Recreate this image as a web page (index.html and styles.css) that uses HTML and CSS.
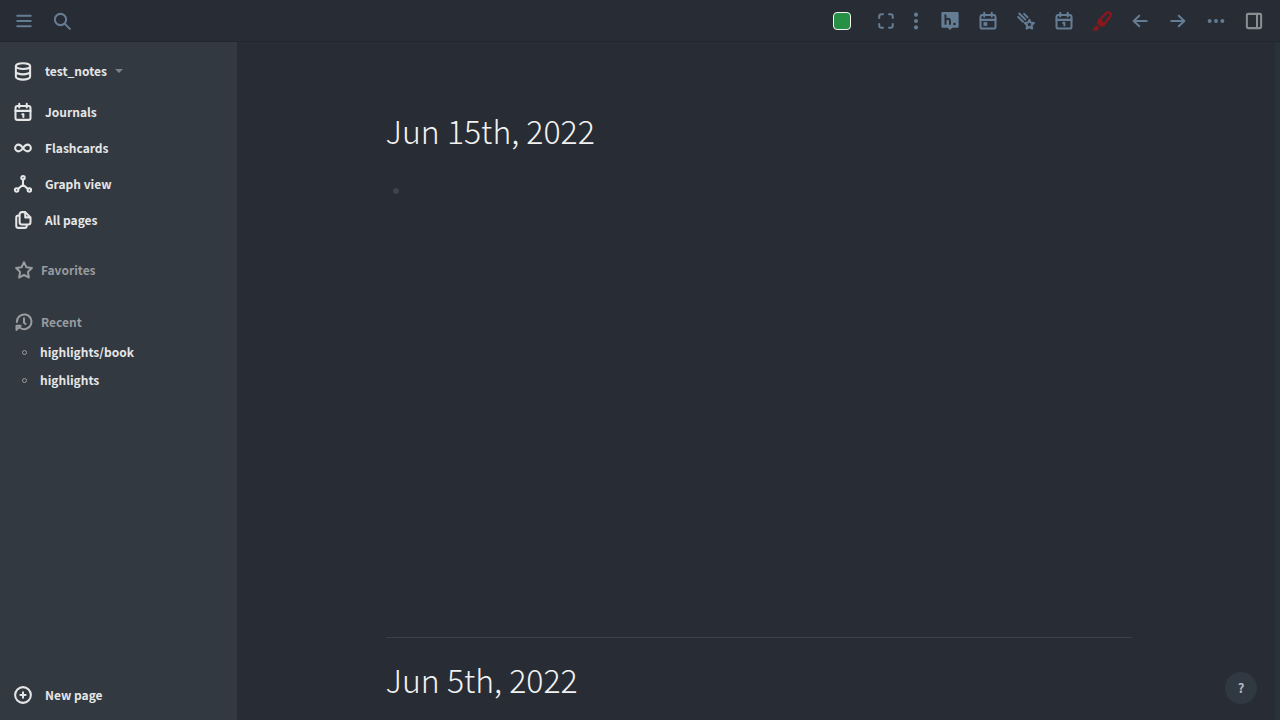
FILE: index.html
```
<!DOCTYPE html>
<html lang="en">
<head>
<meta charset="utf-8">
<meta name="viewport" content="width=device-width, initial-scale=1">
<title>Journals</title>
<link rel="stylesheet" href="styles.css">
</head>
<body>
<div class="app">
  <header class="topbar">
    <div class="tools tools-left">
      <button class="tool" aria-label="Toggle menu"><svg class="icon" viewBox="0 0 24 24"><path d="M3 5h18M3 12h18M3 19h18"/></svg></button>
      <button class="tool" aria-label="Search"><svg class="icon" viewBox="0 0 24 24"><circle cx="10" cy="10" r="7.5"/><path d="M15.500 15.500L22.500 22.500"/></svg></button>
    </div>
    <div class="tools">
      <button class="tool tool-theme" aria-label="Theme colour"><span class="swatch"></span></button>
      <button class="tool tool-narrow" aria-label="Focus mode"><svg class="icon" viewBox="0 0 24 24"><path d="M3 8V6a3 3 0 0 1 3-3h2M16 3h2a3 3 0 0 1 3 3v2M21 16v2a3 3 0 0 1-3 3h-2M8 21H6a3 3 0 0 1-3-3v-2"/></svg></button>
      <button class="tool tool-narrow" aria-label="Plugins"><svg class="icon solid" viewBox="0 0 24 24"><circle cx="12" cy="3.500" r="2.700"/><circle cx="12" cy="12" r="2.700"/><circle cx="12" cy="20.500" r="2.700"/></svg></button>
      <button class="tool" aria-label="Hypothesis"><svg class="icon solid" viewBox="0 0 24 24"><path d="M2 0h20a1.500 1.500 0 0 1 1.500 1.500v18A1.500 1.500 0 0 1 22 21h-7l-3 3-3-3H2a1.500 1.500 0 0 1-1.500-1.500v-18A1.500 1.500 0 0 1 2 0z"/><path class="cut" d="M4.500 4.500H6V17M6 11.500c1.500-3.500 6-3.500 6 .5v5"/><circle class="dot" cx="18" cy="16" r="1.800"/></svg></button>
      <button class="tool" aria-label="Calendar"><svg class="icon" viewBox="0 0 24 24"><rect x="2" y="4" width="20" height="18" rx="2.500"/><path d="M7 1v5M17 1v5M2 10.500h20"/><rect class="fill" x="6" y="13.500" width="5" height="5"/></svg></button>
      <button class="tool" aria-label="Random note"><svg class="icon" viewBox="0 0 24 24"><path d="M1.500 6.500L8 13M3 2l8 8M9.500 2.500L14 7"/><path d="M16.500 10.500l1.700 3.600 4.300.6-3.100 3 .8 4.300-3.700-2-3.700 2 .8-4.300-3.100-3 4.300-.6z"/></svg></button>
      <button class="tool" aria-label="Today"><svg class="icon" viewBox="0 0 24 24"><rect x="2" y="4" width="20" height="18" rx="2.500"/><path d="M7 1v5M17 1v5M2 10.500h20M11 14.500h1.500v3.500"/></svg></button>
      <button class="tool" aria-label="Highlighter"><svg class="icon icon-marker" viewBox="0 0 24 24"><path d="M9 11L16.500 3q3-2 4.800-1t1 4L14.500 16z"/><path class="fill" d="M7.500 9.500L16 17l-2.500 1.500H10L6 15zM5 17l3.500 3-2 3.500H0z"/></svg></button>
      <button class="tool" aria-label="Back"><svg class="icon" viewBox="0 0 24 24"><path d="M21 12H4M11 5l-7.500 7 7.500 7"/></svg></button>
      <button class="tool" aria-label="Forward"><svg class="icon" viewBox="0 0 24 24"><path d="M3 12h17M13 5l7.500 7-7.500 7"/></svg></button>
      <button class="tool" aria-label="More"><svg class="icon solid" viewBox="0 0 24 24"><circle cx="3.500" cy="12" r="2.600"/><circle cx="12" cy="12" r="2.600"/><circle cx="20.500" cy="12" r="2.600"/></svg></button>
      <button class="tool tool-panel" aria-label="Toggle right sidebar"><svg class="icon" viewBox="0 0 24 24"><rect x="2.500" y="2.500" width="19" height="19" rx="1.500"/><path d="M16 2.500v19"/></svg></button>
    </div>
  </header>
  <div class="body">
    <aside class="sidebar">
      <button class="graph">
        <svg class="icon" viewBox="0 0 24 24"><ellipse cx="12" cy="5.500" rx="9.500" ry="3.800"/><path d="M2.500 5.500v14c0 2.200 4.200 4 9.500 4s9.500-1.800 9.500-4v-14M2.500 12.500c0 2.200 4.200 4 9.500 4s9.500-1.800 9.500-4"/></svg>
        <span>test_notes</span><span class="caret"></span>
      </button>
      <nav class="nav">
        <a class="nav-item" href="#"><svg class="icon" viewBox="0 0 24 24"><rect x="2" y="4" width="20" height="18.500" rx="2.500"/><path d="M7 1v5M17 1v5M2 10.500h20M11 15h1.500v3.500"/></svg>Journals</a>
        <a class="nav-item" href="#"><svg class="icon" viewBox="0 0 24 24"><path d="M12 12c-2-3-3.500-4.500-6-4.500a4.500 4.500 0 0 0 0 9c2.500 0 4-1.500 6-4.500 2-3 3.500-4.500 6-4.500a4.500 4.500 0 0 1 0 9c-2.500 0-4-1.500-6-4.500z"/></svg>Flashcards</a>
        <a class="nav-item" href="#"><svg class="icon" viewBox="0 0 24 24"><circle cx="12" cy="3.500" r="2.300"/><circle cx="3.500" cy="20" r="2.300"/><circle cx="20.500" cy="20" r="2.300"/><path d="M12 6v7M5.500 18.500L12 13l6.500 5.500"/></svg>Graph view</a>
        <a class="nav-item" href="#"><svg class="icon" viewBox="0 0 24 24"><path d="M15 1.500h-4.500a3 3 0 0 0-3 3V15a3 3 0 0 0 3 3H19a3 3 0 0 0 3-3V8.500zM15 1.500v7h7M17 18v1.500a3 3 0 0 1-3 3H6a3 3 0 0 1-3-3V9a3 3 0 0 1 3-3h1"/></svg>All pages</a>
      </nav>
      <section class="group">
        <h2 class="group-title"><svg class="icon" viewBox="0 0 24 24"><path d="M12 1.500l3.200 6.800 7.300 1-5.300 5.200 1.300 7.500-6.500-3.600L5.500 22l1.300-7.500L1.500 9.300l7.300-1z"/></svg>Favorites</h2>
      </section>
      <section class="group">
        <h2 class="group-title"><svg class="icon" viewBox="0 0 24 24"><path d="M2.500 12a9.800 9.800 0 1 1 4.500 8M2 22.500V17h5.500zM12 7v6l2 1.500"/></svg>Recent</h2>
        <ul class="recent">
          <li><a class="recent-item" href="#"><span class="ring"></span>highlights/book</a></li>
          <li><a class="recent-item" href="#"><span class="ring"></span>highlights</a></li>
        </ul>
      </section>
      <button class="new-page"><svg class="icon" viewBox="0 0 24 24"><circle cx="12" cy="12" r="10.500"/><path d="M12 8.500v7M8.500 12h7"/></svg>New page</button>
    </aside>
    <main class="main">
      <div class="journals">
        <article class="day">
          <h1 class="day-title">Jun 15th, 2022</h1>
          <ul class="blocks"><li class="block"></li></ul>
        </article>
        <article class="day">
          <h1 class="day-title">Jun 5th, 2022</h1>
        </article>
      </div>
    </main>
  </div>
  <button class="help" aria-label="Help">?</button>
  <div class="scroll-edge"></div>
</div>
</body>
</html>
```
FILE: styles.css
```
* { box-sizing: border-box; }

body {
  margin: 0;
  background: #282c34;
  color: #e6e6e6;
  font-family: "Noto Sans CJK SC", "Noto Sans", sans-serif;
  font-size: 12px;
  font-weight: 700;
  line-height: 20px;
}

button {
  padding: 0;
  border: 0;
  background: none;
  color: inherit;
  font: inherit;
  cursor: pointer;
}

a { color: inherit; text-decoration: none; }

.app { display: flex; flex-direction: column; height: 100vh; overflow: hidden; }

.icon {
  display: block;
  flex: none;
  width: 18px;
  height: 18px;
  overflow: visible;
  fill: none;
  stroke: currentColor;
  stroke-width: 2.7;
  stroke-linecap: round;
  stroke-linejoin: round;
}
.icon.solid { fill: currentColor; stroke: none; }
.icon .fill { fill: currentColor; stroke: none; }
.icon .cut { fill: none; stroke: #282c34; stroke-width: 2.6; stroke-linecap: butt; }
.icon .dot { fill: #282c34; }

.topbar {
  display: flex;
  flex: none;
  justify-content: space-between;
  height: 42px;
  padding: 0 7px 0 5px;
  border-bottom: 1px solid #22262e;
  color: #647d95;
}
.tools { display: flex; align-items: center; }
.tool { display: grid; place-items: center; width: 38px; height: 38px; }
.tool-theme { width: 50px; padding-right: 8px; }
.tool-narrow { width: 30px; }
.tool-panel { color: #8a8d91; }
.icon-marker { width: 20px; height: 20px; color: #8d171c; }
.swatch {
  width: 18px;
  height: 18px;
  border: 1px solid #f2f2f2;
  border-radius: 4px;
  background: #269144;
}

.body { display: flex; flex: 1; min-height: 0; }

.sidebar {
  display: flex;
  flex: none;
  flex-direction: column;
  width: 237px;
  padding-bottom: 10px;
  background: #323941;
}
.graph, .nav-item, .new-page {
  display: flex;
  align-items: center;
  gap: 13px;
  padding-left: 14px;
  text-align: left;
}
.graph { height: 32px; margin: 13px 0 7px; }
.caret {
  margin-left: -5px;
  border: 4px solid transparent;
  border-top-color: #7c8289;
  border-bottom-width: 0;
}
.nav-item { height: 36px; }
.nav { margin-bottom: 14px; }
.group { margin-bottom: 16px; }
.group-title {
  display: flex;
  align-items: center;
  gap: 8px;
  height: 36px;
  margin: 0;
  padding-left: 15px;
  color: #989b9f;
  font-size: 12px;
  font-weight: 700;
}
.recent { margin: -2px 0 0; padding: 0; list-style: none; }
.recent-item {
  display: flex;
  align-items: center;
  gap: 13px;
  height: 28px;
  padding-left: 22px;
}
.ring { width: 5px; height: 5px; border: 1px solid #989b9f; border-radius: 50%; }
.new-page { height: 30px; margin-top: auto; }

.main { flex: 1; overflow: hidden; padding: 64px 24px 0; }
.journals { max-width: 746px; margin: 0 auto; }
.day + .day { padding-top: 17px; border-top: 1px solid #3a414b; }
.day:first-child { min-height: 531px; }
.day-title {
  margin: 0;
  color: #f2f2f2;
  font-size: 32px;
  font-weight: 300;
  line-height: 48px;
}
.blocks { margin: 0; padding: 34px 7px; list-style: none; }
.block { width: 6px; height: 6px; border-radius: 50%; background: #3b454f; }

.help {
  position: fixed;
  right: 23px;
  bottom: 16px;
  width: 32px;
  height: 32px;
  border-radius: 50%;
  background: #303841;
  color: #b5b8bc;
  font-size: 13px;
}
.scroll-edge {
  position: fixed;
  top: 42px;
  right: 0;
  bottom: 0;
  width: 5px;
  background: #29313a;
}
```
